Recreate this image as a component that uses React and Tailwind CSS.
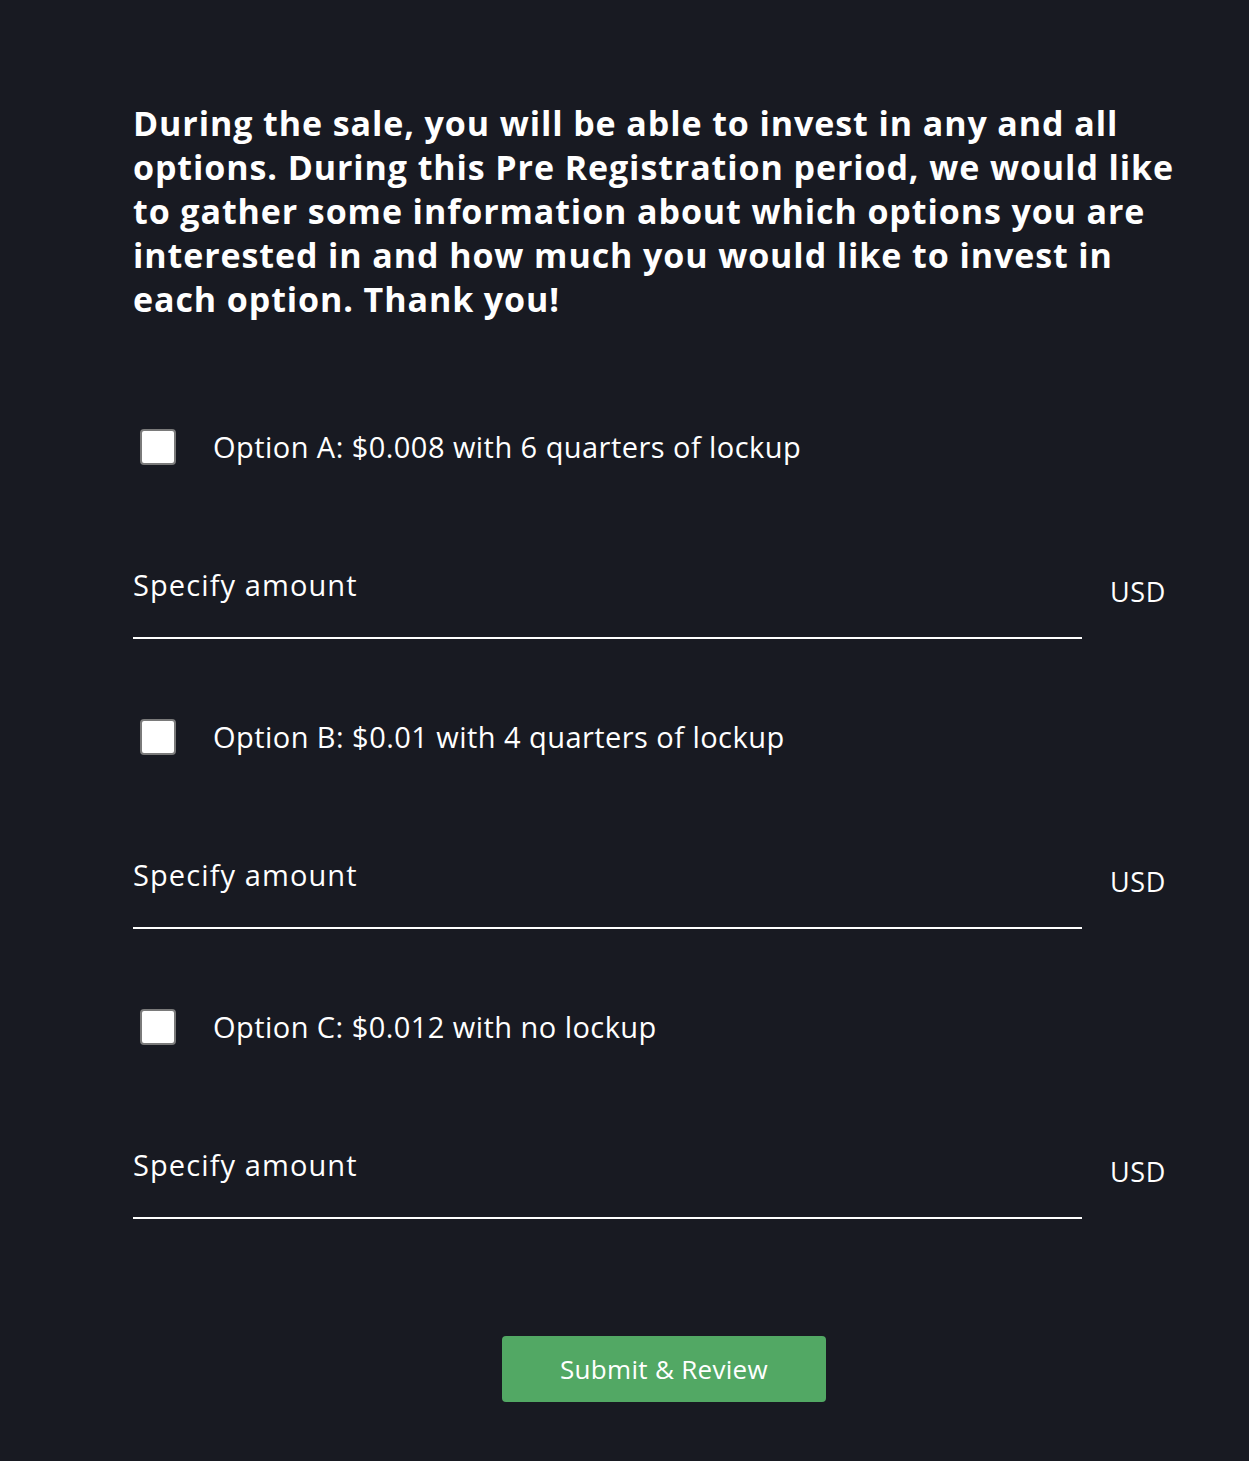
import { useState } from 'react';

const options = [
  { id: 'a', label: 'Option A: $0.008 with 6 quarters of lockup' },
  { id: 'b', label: 'Option B: $0.01 with 4 quarters of lockup' },
  { id: 'c', label: 'Option C: $0.012 with no lockup' },
];

export default function App() {
  const [checked, setChecked] = useState({});
  const [amounts, setAmounts] = useState({});

  return (
    <div className="min-h-[1461px] w-full bg-[#181a22] text-white" style={{ fontFamily: '"Open Sans", "Liberation Sans", sans-serif' }}>
      <div className="pl-[133px] pt-[101px] pb-[59px] w-[1180px]">
        {/* Intro */}
        <p className="text-[34px] leading-[44px] font-bold tracking-[0.9px]">
          During the sale, you will be able to invest in any and all options. During this Pre Registration period, we would like to gather some information about which options you are interested in and how much you would like to invest in each option. Thank you!
        </p>

        {/* Options */}
        <div className="mt-[108px] flex flex-col">
          {options.map((o, i) => (
            <div key={o.id} className={i > 0 ? 'mt-[80px]' : ''}>
              <label className="flex items-center h-9 cursor-pointer">
                <input
                  type="checkbox"
                  checked={!!checked[o.id]}
                  onChange={e => setChecked(c => ({ ...c, [o.id]: e.target.checked }))}
                  className="appearance-none ml-[7px] w-9 h-9 bg-white border-2 border-[#7a7a7a] rounded-[4px] checked:bg-green-500"
                />
                <span className="ml-[37px] text-[29px] font-normal tracking-[0.45px]">{o.label}</span>
              </label>
              <div className="mt-[95px] flex items-start">
                <input
                  value={amounts[o.id] || ''}
                  onChange={e => setAmounts(a => ({ ...a, [o.id]: e.target.value }))}
                  placeholder="Specify amount"
                  className="w-[949px] h-[79px] pb-[28px] bg-transparent border-b-2 border-white outline-none text-[29px] font-normal tracking-[1.1px] text-white placeholder:text-white"
                />
                <span className="ml-[28px] mt-[14px] text-[27px] leading-9 font-normal tracking-[0.6px]">USD</span>
              </div>
            </div>
          ))}
        </div>

        {/* Submit */}
        <button className="mt-[117px] ml-[369px] w-[324px] h-[66px] rounded-[4px] bg-[#52a864] text-white text-[26px] font-normal tracking-[0.3px]">
          Submit &amp; Review
        </button>
      </div>
    </div>
  );
}
